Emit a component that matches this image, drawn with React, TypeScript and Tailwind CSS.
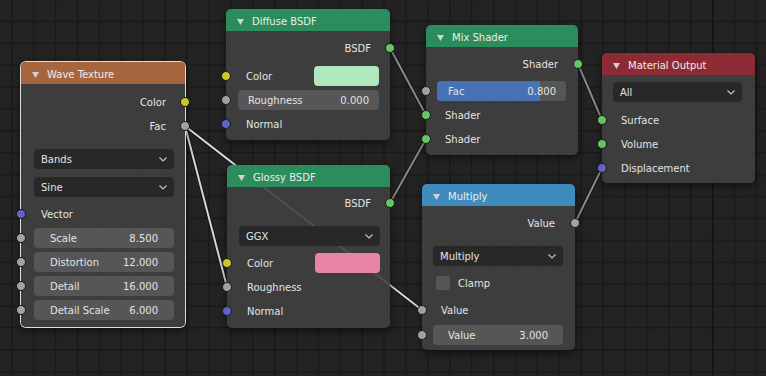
import React from "react";

const sockCls = {
  yellow: "bg-[#c7c729]",
  gray: "bg-[#a1a1a1]",
  blue: "bg-[#6363c7]",
  green: "bg-[#63c763]",
};
type SC = keyof typeof sockCls;

function Socket({ c, side }: { c: SC; side: "l" | "r" }) {
  return (
    <span
      className={`absolute top-1/2 -translate-y-1/2 w-[10px] h-[10px] rounded-full border border-[#181818] ${sockCls[c]} ${
        side === "l" ? "left-[-5px]" : "right-[-5px]"
      }`}
    />
  );
}

function Chevron() {
  return (
    <svg width="8" height="5" viewBox="0 0 8 5" className="shrink-0">
      <polyline points="0.5,0.5 4,4 7.5,0.5" fill="none" stroke="#c8c8c8" strokeWidth="1.1" />
    </svg>
  );
}

function T({ children }: { children: React.ReactNode }) {
  return <span className="translate-y-[1px]">{children}</span>;
}

function Node({
  className,
  header,
  title,
  selected,
  bodyClass,
  children,
}: {
  className: string;
  header: string;
  title: string;
  selected?: boolean;
  bodyClass: string;
  children: React.ReactNode;
}) {
  return (
    <div
      className={`absolute flex flex-col rounded-[5px] shadow-[0_3px_8px_rgba(0,0,0,0.55)] ${
        selected ? "ring-1 ring-[#dcdcdc]" : ""
      } ${className}`}
    >
      <div className={`h-[22px] shrink-0 flex items-center pt-[3px] rounded-t-[5px] ${header}`}>
        <svg width="7" height="6" viewBox="0 0 7 6" className="ml-[11px] mr-[8px] shrink-0">
          <polygon points="0,0 7,0 3.5,6" fill="#d2d2d2" />
        </svg>
        <span className="text-[#ececec]">{title}</span>
      </div>
      <div className={`flex flex-col rounded-b-[5px] bg-[rgba(64,64,64,0.9)] ${bodyClass}`}>{children}</div>
    </div>
  );
}

function OutRow({ label, c, className }: { label: string; c: SC; className: string }) {
  return (
    <div className={`relative h-[24px] flex items-center justify-end ${className}`}>
      <T>{label}</T>
      <Socket c={c} side="r" />
    </div>
  );
}

function InRow({ label, c, className, children }: { label: string; c?: SC; className: string; children?: React.ReactNode }) {
  return (
    <div className={`relative h-[24px] flex items-center justify-between ${className}`}>
      <T>{label}</T>
      {children}
      {c && <Socket c={c} side="l" />}
    </div>
  );
}

function Field({
  label,
  value,
  c,
  className,
  inner,
}: {
  label: string;
  value: string;
  c?: SC;
  className: string;
  inner: string;
}) {
  return (
    <div className={`relative h-[20px] ${className}`}>
      <div className={`h-[20px] rounded-[4px] bg-[#565656] flex items-center justify-between ${inner}`}>
        <T>{label}</T>
        <T>{value}</T>
      </div>
      {c && <Socket c={c} side="l" />}
    </div>
  );
}

function Dropdown({ label, className }: { label: string; className: string }) {
  return (
    <div className={`h-[20px] rounded-[4px] bg-[#282828] flex items-center justify-between pl-[7px] pr-[7px] ${className}`}>
      <T>{label}</T>
      <Chevron />
    </div>
  );
}

export default function App() {
  return (
    <div className="relative w-[766px] h-[376px] overflow-hidden bg-[#232323] text-[10px] leading-none text-[#e4e4e4] font-['DejaVu_Sans',sans-serif]">
      <svg className="absolute inset-0" width="766" height="376">
        <defs>
          <pattern id="grid" x="11" y="20.5" width="21.9" height="21.9" patternUnits="userSpaceOnUse">
            <line x1="0.75" y1="0" x2="0.75" y2="21.9" stroke="#191919" strokeWidth="1.5" />
            <line x1="0" y1="0.75" x2="21.9" y2="0.75" stroke="#191919" strokeWidth="1.5" />
          </pattern>
        </defs>
        <rect width="766" height="376" fill="url(#grid)" />
        <line x1="713" y1="0" x2="713" y2="376" stroke="#141414" strokeWidth="1.5" />
      </svg>

      <svg className="absolute inset-0" width="766" height="376">
        <g stroke="#151515" strokeWidth="4" strokeLinecap="round">
          <line x1="390" y1="48" x2="426" y2="115" />
          <line x1="390" y1="203" x2="426" y2="139" />
          <line x1="578" y1="64" x2="602" y2="120" />
          <line x1="575" y1="223" x2="602" y2="168" />
          <line x1="185" y1="126" x2="227" y2="287" />
          <line x1="185" y1="126" x2="422" y2="310" />
        </g>
        <g stroke="#8a8a8a" strokeWidth="2" strokeLinecap="round">
          <line x1="390" y1="48" x2="426" y2="115" />
          <line x1="390" y1="203" x2="426" y2="139" />
          <line x1="578" y1="64" x2="602" y2="120" />
          <line x1="575" y1="223" x2="602" y2="168" />
        </g>
        <g stroke="#d6d6d6" strokeWidth="2" strokeLinecap="round">
          <line x1="185" y1="126" x2="227" y2="287" />
          <line x1="185" y1="126" x2="422" y2="310" />
        </g>
      </svg>

      {/* Wave Texture */}
      <Node
        className="left-[21px] top-[62px] w-[164px]"
        header="bg-[#a6653c]"
        title="Wave Texture"
        selected
        bodyClass="pb-[7px]"
      >
        <OutRow label="Color" c="yellow" className="mt-[6px] pr-[19px]" />
        <OutRow label="Fac" c="gray" className="pr-[19px]" />
        <Dropdown label="Bands" className="mt-[11px] ml-[13px] mr-[11px]" />
        <Dropdown label="Sine" className="mt-[8px] ml-[13px] mr-[11px]" />
        <InRow label="Vector" c="blue" className="mt-[5px] pl-[20px]" />
        <Field label="Scale" value="8.500" c="gray" className="mt-[2px]" inner="ml-[13px] mr-[11px] pl-[16px] pr-[16px]" />
        <Field label="Distortion" value="12.000" c="gray" className="mt-[4px]" inner="ml-[13px] mr-[11px] pl-[16px] pr-[16px]" />
        <Field label="Detail" value="16.000" c="gray" className="mt-[4px]" inner="ml-[13px] mr-[11px] pl-[16px] pr-[16px]" />
        <Field label="Detail Scale" value="6.000" c="gray" className="mt-[4px]" inner="ml-[13px] mr-[11px] pl-[16px] pr-[16px]" />
      </Node>

      {/* Diffuse BSDF */}
      <Node className="left-[226px] top-[9px] w-[164px]" header="bg-[#2b8c5c]" title="Diffuse BSDF" bodyClass="pb-[4px]">
        <OutRow label="BSDF" c="green" className="mt-[5px] pr-[19px]" />
        <InRow label="Color" c="yellow" className="mt-[4px] pl-[20px]">
          <span className="w-[65px] h-[20px] rounded-[4px] bg-[#afe8bf] mr-[11px]" />
        </InRow>
        <Field label="Roughness" value="0.000" c="gray" className="mt-[2px]" inner="ml-[12px] mr-[11px] pl-[10px] pr-[10px]" />
        <InRow label="Normal" c="blue" className="mt-[2px] pl-[20px]" />
      </Node>

      {/* Glossy BSDF */}
      <Node className="left-[227px] top-[165px] w-[163px]" header="bg-[#2b8c5c]" title="Glossy BSDF" bodyClass="pb-[5px]">
        <OutRow label="BSDF" c="green" className="mt-[4px] pr-[19px]" />
        <Dropdown label="GGX" className="mt-[11px] ml-[12px] mr-[10px]" />
        <InRow label="Color" c="yellow" className="mt-[5px] pl-[20px]">
          <span className="w-[65px] h-[20px] rounded-[4px] bg-[#e884a7] mr-[10px]" />
        </InRow>
        <InRow label="Roughness" c="gray" className="pl-[20px]" />
        <InRow label="Normal" c="blue" className="pl-[20px]" />
      </Node>

      {/* Mix Shader */}
      <Node className="left-[426px] top-[25px] w-[152px]" header="bg-[#2b8c5c]" title="Mix Shader" bodyClass="pb-[4px]">
        <OutRow label="Shader" c="green" className="mt-[5px] pr-[20px]" />
        <div className="relative h-[20px] mt-[5px]">
          <div className="relative h-[20px] ml-[11px] mr-[12px] rounded-[4px] bg-[#565656] overflow-hidden">
            <div className="absolute left-0 top-0 bottom-0 w-[80%] bg-[#4772b3]" />
            <div className="relative h-full flex items-center justify-between pl-[11px] pr-[10px]">
              <T>Fac</T>
              <T>0.800</T>
            </div>
          </div>
          <Socket c="gray" side="l" />
        </div>
        <InRow label="Shader" c="green" className="mt-[2px] pl-[19px]" />
        <InRow label="Shader" c="green" className="pl-[19px]" />
      </Node>

      {/* Multiply */}
      <Node className="left-[422px] top-[184px] w-[153px]" header="bg-[#3e8cbd]" title="Multiply" bodyClass="pb-[5px]">
        <OutRow label="Value" c="gray" className="mt-[5px] pr-[20px]" />
        <Dropdown label="Multiply" className="mt-[11px] ml-[11px] mr-[12px]" />
        <div className="mt-[10px] h-[14px] flex items-center">
          <span className="ml-[14px] w-[14px] h-[14px] rounded-[3px] bg-[#565656]" />
          <span className="ml-[8px] translate-y-[1px]">Clamp</span>
        </div>
        <InRow label="Value" c="gray" className="mt-[8px] pl-[19px]" />
        <Field label="Value" value="3.000" c="gray" className="mt-[3px]" inner="ml-[11px] mr-[12px] pl-[15px] pr-[15px]" />
      </Node>

      {/* Material Output */}
      <Node className="left-[602px] top-[53px] w-[153px]" header="bg-[#8c2b35]" title="Material Output" bodyClass="pb-[3px]">
        <Dropdown label="All" className="mt-[7px] ml-[11px] mr-[13px]" />
        <InRow label="Surface" c="green" className="mt-[6px] pl-[19px]" />
        <InRow label="Volume" c="green" className="pl-[19px]" />
        <InRow label="Displacement" c="blue" className="pl-[19px]" />
      </Node>
    </div>
  );
}
